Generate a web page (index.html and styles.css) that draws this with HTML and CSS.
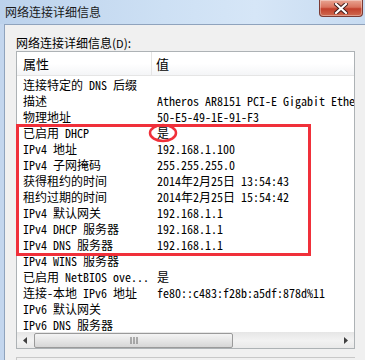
FILE: index.html
```
<!DOCTYPE html>
<html lang="zh-CN">
<head>
  <meta charset="UTF-8" />
  <title>网络连接详细信息</title>
  <link rel="stylesheet" href="styles.css">
</head>
<body>
  <div class="window">
    <div class="titlebar">
      <span class="title">网络连接详细信息</span>
      <button class="close-btn">
        <svg width="14" height="11" viewBox="0 0 14 11">
          <path d="M2 1 L12 10 M12 1 L2 10" stroke="#3d1a18" stroke-width="4" stroke-linecap="square" />
          <path d="M2 1 L12 10 M12 1 L2 10" stroke="#ffffff" stroke-width="2.2" stroke-linecap="square" />
        </svg>
      </button>
    </div>

    <div class="dialog">
      <div class="label">网络连接详细信息(<u>D</u>):</div>

      <div class="list">
        <div class="list-head">
          <div class="col-prop">属性</div>
          <div class="col-val">值</div>
        </div>

        <div class="rows">
          <div class="row"><div class="prop">连接特定的 DNS 后缀</div><div class="val"></div></div>
          <div class="row"><div class="prop">描述</div><div class="val">Atheros AR8151 PCI-E Gigabit Ethernet Controller (NDIS 6.20)</div></div>
          <div class="row"><div class="prop">物理地址</div><div class="val">50-E5-49-1E-91-F3</div></div>
          <div class="row"><div class="prop">已启用 DHCP</div><div class="val">是</div></div>
          <div class="row"><div class="prop">IPv4 地址</div><div class="val">192.168.1.100</div></div>
          <div class="row"><div class="prop">IPv4 子网掩码</div><div class="val">255.255.255.0</div></div>
          <div class="row"><div class="prop">获得租约的时间</div><div class="val">2014年2月25日 13:54:43</div></div>
          <div class="row"><div class="prop">租约过期的时间</div><div class="val">2014年2月25日 15:54:42</div></div>
          <div class="row"><div class="prop">IPv4 默认网关</div><div class="val">192.168.1.1</div></div>
          <div class="row"><div class="prop">IPv4 DHCP 服务器</div><div class="val">192.168.1.1</div></div>
          <div class="row"><div class="prop">IPv4 DNS 服务器</div><div class="val">192.168.1.1</div></div>
          <div class="row"><div class="prop">IPv4 WINS 服务器</div><div class="val"></div></div>
          <div class="row"><div class="prop">已启用 NetBIOS ove...</div><div class="val">是</div></div>
          <div class="row"><div class="prop">连接-本地 IPv6 地址</div><div class="val">fe80::c483:f28b:a5df:878d%11</div></div>
          <div class="row"><div class="prop">IPv6 默认网关</div><div class="val"></div></div>
          <div class="row"><div class="prop">IPv6 DNS 服务器</div><div class="val"></div></div>
        </div>

        <div class="hscroll">
          <div class="arrow">
            <svg width="5" height="7" viewBox="0 0 5 7"><path d="M4 0 L0 3.5 L4 7 Z" fill="#404040" /></svg>
          </div>
          <div class="track">
            <div class="thumb">
              <svg width="8" height="7" viewBox="0 0 8 7"><path d="M1 0 V7 M4 0 V7 M7 0 V7" stroke="#6a6a6a" stroke-width="1" /></svg>
            </div>
          </div>
          <div class="arrow">
            <svg width="5" height="7" viewBox="0 0 5 7"><path d="M1 0 L5 3.5 L1 7 Z" fill="#404040" /></svg>
          </div>
        </div>
      </div>

      <div class="next-box"></div>
    </div>
  </div>

  <div class="highlight"></div>
  <svg class="circle-mark" width="30" height="20" viewBox="0 0 30 20">
    <ellipse cx="15" cy="10" rx="13" ry="8" fill="none" stroke="#f0303a" stroke-width="2.5" />
  </svg>
</body>
</html>
```

FILE: styles.css
```
* {
  box-sizing: border-box;
  margin: 0;
  padding: 0;
}

body {
  width: 365px;
  height: 360px;
  overflow: hidden;
  background-color: #c3d6ee;
  font-family: "Noto Sans CJK SC", sans-serif;
  font-size: 12px;
  color: #000;
}

.window {
  display: flex;
  flex-direction: column;
  height: 360px;
}

.titlebar {
  height: 25px;
  display: flex;
  justify-content: space-between;
  align-items: flex-start;
  padding-left: 5px;
  background: linear-gradient(90deg, #bcd2ec 0%, #cde0f4 45%, #d6e6f7 70%, #c7dbf1 100%);
}

.title {
  line-height: 24px;
  font-size: 12px;
  color: #1a1a1a;
}

.close-btn {
  width: 44px;
  height: 17px;
  margin-right: 2px;
  border: 1px solid #7b3a33;
  border-top: none;
  border-radius: 0 0 4px 4px;
  background: linear-gradient(180deg, #e9a593 0%, #d9735e 45%, #c2402c 55%, #cf6a50 100%);
  display: flex;
  align-items: center;
  justify-content: center;
  box-shadow: inset 0 0 0 1px rgba(255, 255, 255, 0.35);
}

.dialog {
  flex: 1;
  margin-left: 4px;
  border-left: 1px solid #8fa3bd;
  border-top: 1px solid #8fa3bd;
  background-color: #f0f0f0;
  padding: 10px 0 0 11px;
}

.label {
  height: 15px;
  line-height: 15px;
  font-size: 12px;
  margin-bottom: 1px;
}

.label u {
  text-decoration: none;
  font-size: 11px;
}

.list {
  width: 339px;
  height: 298px;
  border: 1px solid #adb2b5;
  background-color: #fff;
  display: flex;
  flex-direction: column;
  overflow: hidden;
}

.list-head {
  height: 24px;
  flex-shrink: 0;
  display: flex;
  background: linear-gradient(180deg, #ffffff 0%, #ffffff 50%, #f4f5f7 100%);
  border-bottom: 1px solid #e5e5e5;
}

.col-prop {
  width: 135px;
  padding-left: 6px;
  line-height: 24px;
  font-size: 13px;
  border-right: 1px solid #e5e5e5;
}

.col-val {
  padding-left: 4px;
  line-height: 24px;
  font-size: 13px;
}

.rows {
  flex: 1;
  font-family: "Noto Sans Mono CJK SC", "Liberation Mono", "Noto Sans CJK SC", monospace;
  font-size: 12px;
}

.row {
  height: 16px;
  display: flex;
  align-items: center;
  white-space: nowrap;
}

.prop {
  width: 135px;
  flex-shrink: 0;
  padding-left: 6px;
  overflow: hidden;
}

.val {
  padding-left: 5px;
}

.hscroll {
  height: 17px;
  flex-shrink: 0;
  display: flex;
  background: linear-gradient(180deg, #e6e6e6 0%, #f2f2f2 50%, #e8e8e8 100%);
}

.arrow {
  width: 17px;
  display: flex;
  align-items: center;
  justify-content: center;
}

.track {
  flex: 1;
  display: flex;
}

.thumb {
  width: 199px;
  margin: 1px 0;
  border: 1px solid #9a9a9a;
  border-radius: 2px;
  background: linear-gradient(180deg, #f4f4f4 0%, #e6e6e6 50%, #d6d6d6 100%);
  display: flex;
  align-items: center;
  justify-content: center;
}

.next-box {
  margin-top: 8px;
  width: 339px;
  height: 10px;
  border-top: 1px solid #c8c8c8;
  border-left: 1px solid #c8c8c8;
}

.highlight {
  position: absolute;
  left: 16px;
  top: 124px;
  width: 295px;
  height: 132px;
  border: 3px solid #f0303a;
}

.circle-mark {
  position: absolute;
  left: 148px;
  top: 123px;
}
```
